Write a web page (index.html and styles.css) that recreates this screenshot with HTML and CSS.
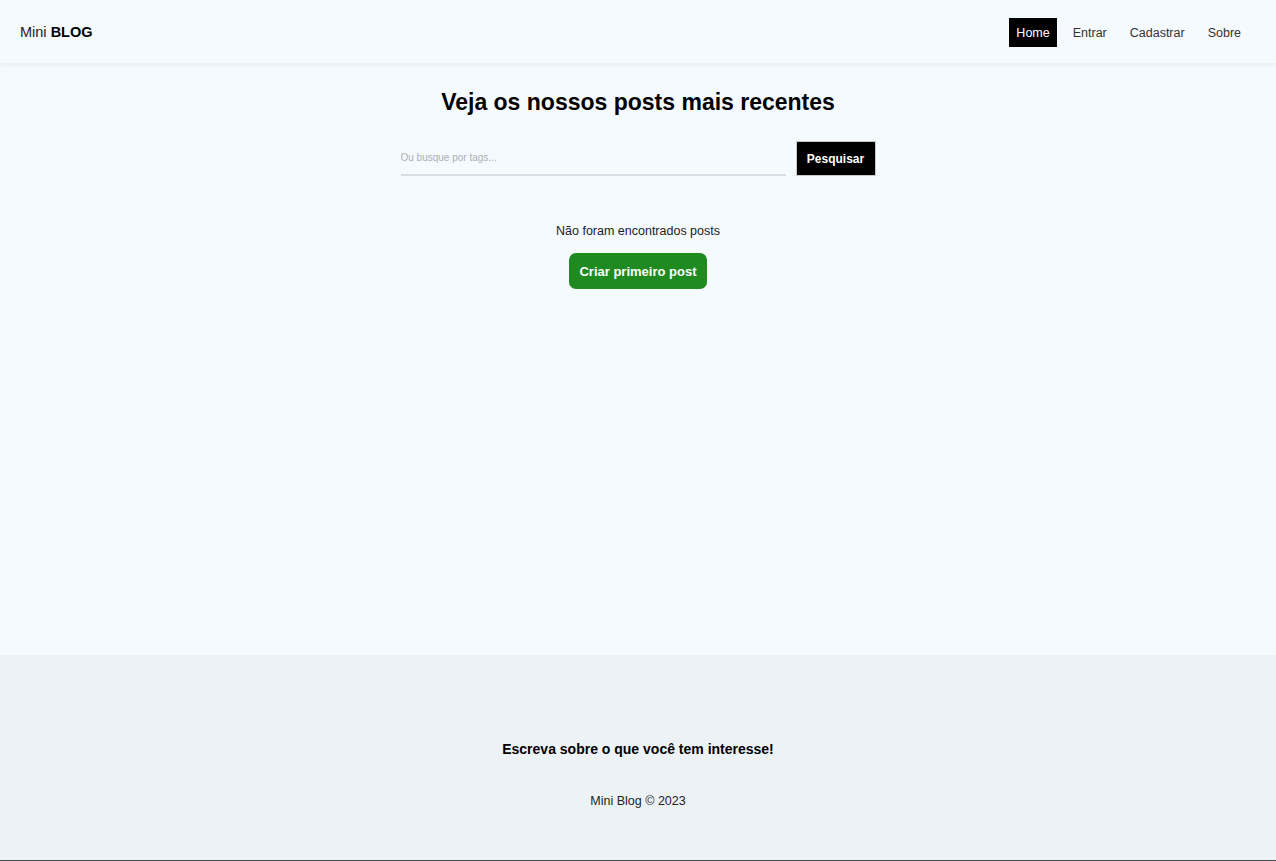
FILE: index.html
```html
<!DOCTYPE html>
<html lang="pt-BR">
<head>
<meta charset="utf-8">
<title>Mini Blog</title>
<link rel="stylesheet" href="styles.css">
</head>
<body>
  <header class="navbar">
    <a class="brand" href="#">Mini <strong>BLOG</strong></a>
    <nav class="links">
      <a class="link active" href="#">Home</a>
      <a class="link" href="#">Entrar</a>
      <a class="link" href="#">Cadastrar</a>
      <a class="link" href="#">Sobre</a>
    </nav>
  </header>
  <main class="home">
    <h1 class="title">Veja os nossos posts mais recentes</h1>
    <form class="search">
      <input class="search-input" type="text" placeholder="Ou busque por tags...">
      <button class="btn-dark" type="button">Pesquisar</button>
    </form>
    <div class="noposts">
      <p class="noposts-text">Não foram encontrados posts</p>
      <a class="btn-green" href="#">Criar primeiro post</a>
    </div>
  </main>
  <footer class="footer">
    <h3 class="footer-title">Escreva sobre o que você tem interesse!</h3>
    <p class="footer-copy">Mini Blog &copy; 2023</p>
  </footer>
</body>
</html>
```

FILE: styles.css
```css
* { box-sizing: border-box; }

html, body { margin: 0; padding: 0; }

body {
  font-family: "Liberation Sans", Arial, sans-serif;
  background: #f5faff;
  color: #111;
  min-height: 100vh;
  display: flex;
  flex-direction: column;
}

a { text-decoration: none; color: inherit; }

.navbar {
  height: 63px;
  display: flex;
  align-items: center;
  justify-content: space-between;
  padding: 1px 28px 0 20px;
  box-shadow: 0 2px 5px rgba(0, 0, 0, 0.06);
  background: #f5faff;
}

.brand {
  font-size: 14.5px;
  color: #222;
}
.brand strong { color: #000; font-weight: 700; }

.links {
  display: flex;
  align-items: center;
  gap: 9px;
}

.link {
  font-size: 12.5px;
  color: #333;
  padding: 7px 7px 5px;
  line-height: 17px;
}

.link.active {
  background: #000;
  color: #fff;
}

.home {
  flex: 1;
  display: flex;
  flex-direction: column;
  align-items: center;
  padding-top: 22px;
}

.title {
  margin: 0;
  font-size: 23px;
  line-height: 34px;
  font-weight: 700;
  color: #000;
}

.search {
  margin-top: 22px;
  display: flex;
  gap: 10px;
  align-items: stretch;
}

.search-input {
  width: 385px;
  height: 35px;
  border: none;
  border-bottom: 2px solid #d9dde0;
  background: transparent;
  font-family: inherit;
  font-size: 10px;
  padding: 0;
  outline: none;
}
.search-input::placeholder { color: #aab0b4; }

.btn-dark {
  width: 80px;
  height: 35px;
  background: #000;
  color: #fff;
  border: 1px solid #c8c8c8;
  font-family: inherit;
  font-size: 12px;
  font-weight: 700;
  padding: 0;
}

.noposts {
  margin-top: 46px;
  display: flex;
  flex-direction: column;
  align-items: center;
}

.noposts-text {
  margin: 0;
  font-size: 12.5px;
  line-height: 18px;
  color: #222;
}

.btn-green {
  margin-top: 13px;
  display: inline-flex;
  align-items: center;
  justify-content: center;
  width: 138px;
  height: 36px;
  background: #1f8a1f;
  color: #fff;
  font-size: 13px;
  font-weight: 700;
  border-radius: 7px;
}

.footer {
  height: 206px;
  background: #edf2f6;
  border-bottom: 1px solid #45484c;
  display: flex;
  flex-direction: column;
  align-items: center;
  padding-top: 84px;
}

.footer-title {
  margin: 0;
  font-size: 14px;
  line-height: 20px;
  font-weight: 700;
  color: #000;
}

.footer-copy {
  margin: 32px 0 0;
  font-size: 12.5px;
  line-height: 20px;
  color: #222;
}
```
